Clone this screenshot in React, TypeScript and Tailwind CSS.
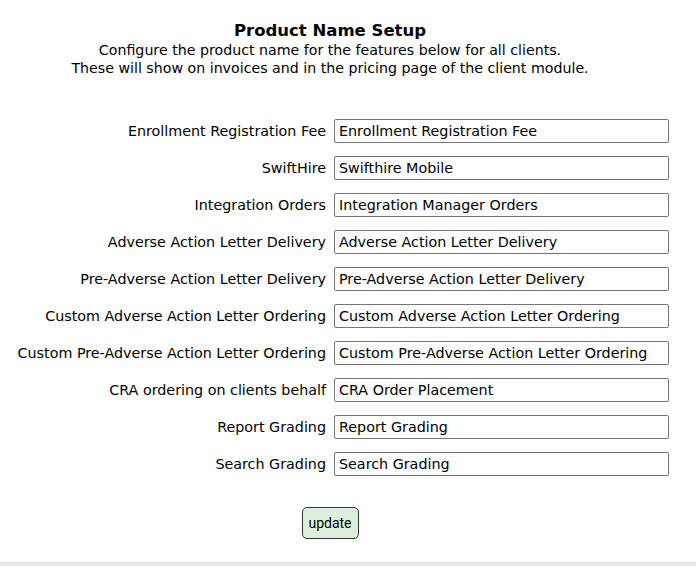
import { useState } from "react";

const rows: [string, string][] = [
  ["Enrollment Registration Fee", "Enrollment Registration Fee"],
  ["SwiftHire", "Swifthire Mobile"],
  ["Integration Orders", "Integration Manager Orders"],
  ["Adverse Action Letter Delivery", "Adverse Action Letter Delivery"],
  ["Pre-Adverse Action Letter Delivery", "Pre-Adverse Action Letter Delivery"],
  ["Custom Adverse Action Letter Ordering", "Custom Adverse Action Letter Ordering"],
  ["Custom Pre-Adverse Action Letter Ordering", "Custom Pre-Adverse Action Letter Ordering"],
  ["CRA ordering on clients behalf", "CRA Order Placement"],
  ["Report Grading", "Report Grading"],
  ["Search Grading", "Search Grading"],
];

export default function App() {
  const [values, setValues] = useState(rows.map((r) => r[1]));

  return (
    <div className="flex h-[566px] w-full flex-col bg-white font-['DejaVu_Sans',Verdana,sans-serif] text-black">
      <div className="flex-1">
        <div className="w-[660px] pt-[21px] text-center">
          <h1 className="text-[16.5px] font-bold leading-[20px]">Product Name Setup</h1>
          <p className="text-[14.2px] leading-[18px]">
            Configure the product name for the features below for all clients.
            <br />
            These will show on invoices and in the pricing page of the client module.
          </p>
        </div>

        <div className="mt-[42px] flex flex-col gap-[13px] pr-[27px]">
          {rows.map((row, i) => (
            <div key={row[0]} className="flex items-center justify-end gap-[8px]">
              <label className="text-[14.3px] leading-[24px] whitespace-nowrap">{row[0]}</label>
              <input
                value={values[i]}
                onChange={(e) => {
                  const next = [...values];
                  next[i] = e.target.value;
                  setValues(next);
                }}
                className="h-[24px] w-[335px] rounded-[2px] border border-[#767676] px-[4px] text-[14.3px] outline-none"
              />
            </div>
          ))}
        </div>

        <div className="mt-[31px] flex w-[660px] justify-center">
          <button className="h-[32px] w-[57px] rounded-[5px] border border-[#333] bg-[#dcefdc] font-['Roboto',sans-serif] text-[14px]">
            update
          </button>
        </div>
      </div>
      <div className="h-[4px] bg-[#e5e5e5]" />
    </div>
  );
}
